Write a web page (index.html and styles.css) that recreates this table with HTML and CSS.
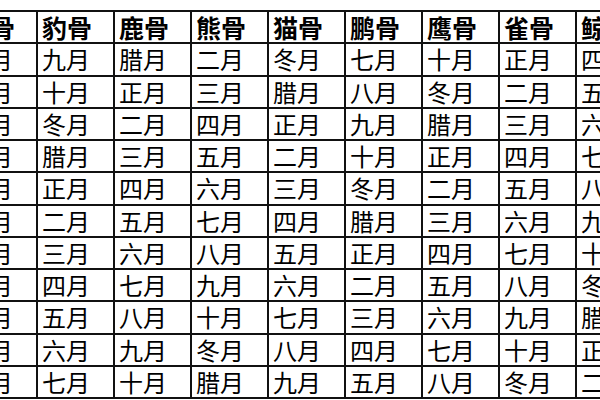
FILE: index.html
```html
<!DOCTYPE html>
<html lang="zh">
<head>
<meta charset="utf-8">
<link rel="stylesheet" href="styles.css">
</head>
<body>
<table class="bones">
<colgroup><col><col><col><col><col><col><col><col><col></colgroup>
<thead>
<tr><th>狗骨</th><th>豹骨</th><th>鹿骨</th><th>熊骨</th><th>猫骨</th><th>鹏骨</th><th>鹰骨</th><th>雀骨</th><th>鲸骨</th></tr>
</thead>
<tbody>
<tr><td>八月</td><td>九月</td><td>腊月</td><td>二月</td><td>冬月</td><td>七月</td><td>十月</td><td>正月</td><td>四月</td></tr>
<tr><td>九月</td><td>十月</td><td>正月</td><td>三月</td><td>腊月</td><td>八月</td><td>冬月</td><td>二月</td><td>五月</td></tr>
<tr><td>十月</td><td>冬月</td><td>二月</td><td>四月</td><td>正月</td><td>九月</td><td>腊月</td><td>三月</td><td>六月</td></tr>
<tr><td>冬月</td><td>腊月</td><td>三月</td><td>五月</td><td>二月</td><td>十月</td><td>正月</td><td>四月</td><td>七月</td></tr>
<tr><td>腊月</td><td>正月</td><td>四月</td><td>六月</td><td>三月</td><td>冬月</td><td>二月</td><td>五月</td><td>八月</td></tr>
<tr><td>正月</td><td>二月</td><td>五月</td><td>七月</td><td>四月</td><td>腊月</td><td>三月</td><td>六月</td><td>九月</td></tr>
<tr><td>二月</td><td>三月</td><td>六月</td><td>八月</td><td>五月</td><td>正月</td><td>四月</td><td>七月</td><td>十月</td></tr>
<tr><td>三月</td><td>四月</td><td>七月</td><td>九月</td><td>六月</td><td>二月</td><td>五月</td><td>八月</td><td>冬月</td></tr>
<tr><td>四月</td><td>五月</td><td>八月</td><td>十月</td><td>七月</td><td>三月</td><td>六月</td><td>九月</td><td>腊月</td></tr>
<tr><td>五月</td><td>六月</td><td>九月</td><td>冬月</td><td>八月</td><td>四月</td><td>七月</td><td>十月</td><td>正月</td></tr>
<tr><td>六月</td><td>七月</td><td>十月</td><td>腊月</td><td>九月</td><td>五月</td><td>八月</td><td>冬月</td><td>二月</td></tr>
</tbody>
</table>
</body>
</html>
```
FILE: styles.css
```css
html, body {
  margin: 0;
  padding: 0;
  background: #fff;
  overflow: hidden;
  width: 600px;
  height: 400px;
}
.bones {
  border-collapse: collapse;
  table-layout: fixed;
  width: 693px;
  margin: 10px 0 0 -41px;
  font-family: "Noto Sans CJK SC", "Noto Sans CJK JP", sans-serif;
  color: #000;
}
.bones col {
  width: 77px;
}
.bones th,
.bones td {
  border: 2px solid #111;
  height: 30.25px;
  padding: 0 0 0 4px;
  text-align: left;
  vertical-align: middle;
  font-size: 24px;
  line-height: 26px;
  white-space: nowrap;
}
.bones th {
  font-weight: 700;
  font-size: 25px;
}
.bones td {
  font-weight: 400;
}
```
